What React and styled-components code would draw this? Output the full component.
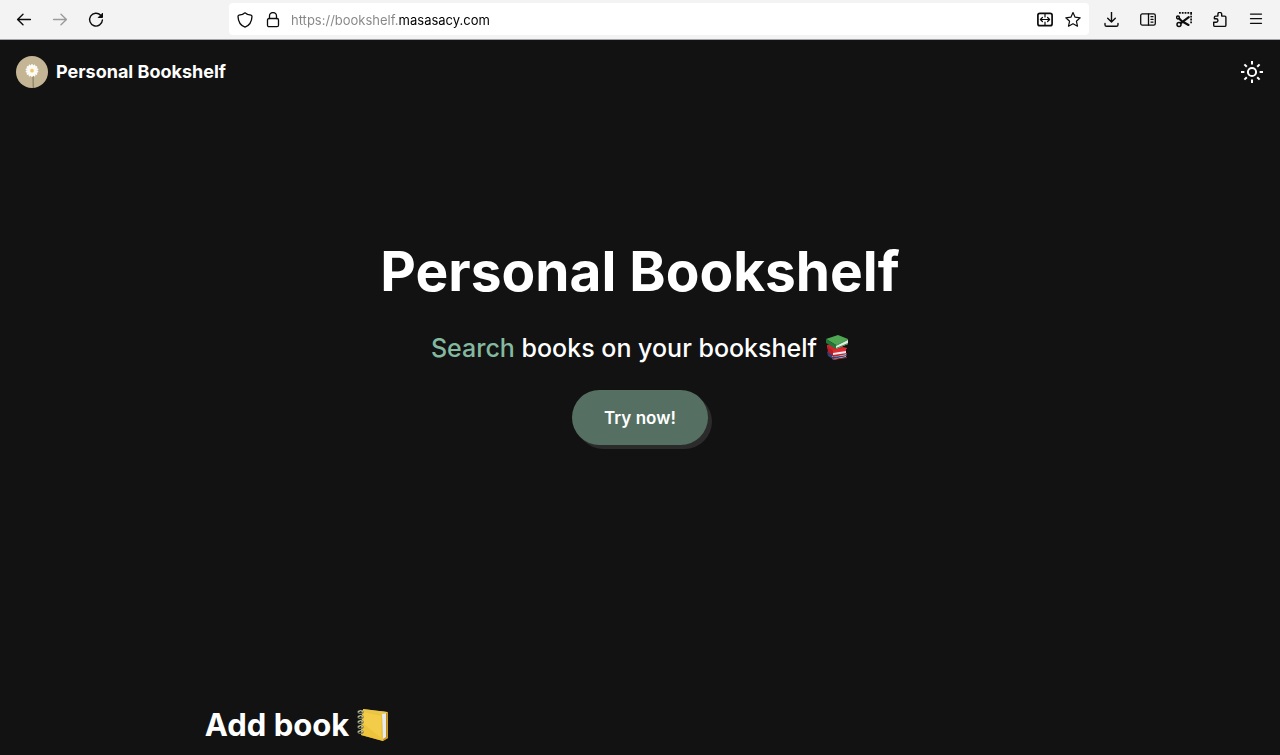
import React from "react";
import styled, { createGlobalStyle } from "styled-components";

const GlobalStyle = createGlobalStyle`
  *, *::before, *::after { box-sizing: border-box; }
  body {
    margin: 0;
    background: #121212;
    color: #fff;
    font-family: Inter, "Liberation Sans", sans-serif;
  }
  h1, h2, p { margin: 0; }
  svg { display: block; flex: none; }
`;

const Page = styled.div`
  min-height: 100vh;
`;

const Toolbar = styled.div`
  display: flex;
  align-items: center;
  height: 40px;
  padding: 0 6px 2px;
  background: #f3f3f3;
  border-bottom: 1px solid #a3a3aa;
  color: #0c0c0d;
`;

const ToolButton = styled.button`
  display: grid;
  place-items: center;
  width: 36px;
  height: 32px;
  padding: 2px 0 0;
  border: 0;
  background: none;
  color: inherit;
  &:disabled { color: #9b9b9b; }
`;

const Spacer = styled.div`
  flex: 0 1 115px;
`;

const AddressBar = styled.form`
  flex: 1;
  display: flex;
  align-items: center;
  height: 32px;
  margin-right: 5px;
  padding: 0 2px;
  border-radius: 4px;
  background: #fff;
`;

const BarButton = styled(ToolButton)`
  width: 28px;
`;

const AddressInput = styled.input`
  flex: 1;
  min-width: 0;
  height: 24px;
  margin-left: 4px;
  padding: 2px 0 0;
  border: 0;
  outline: 0;
  font-family: Inter, "Liberation Sans", sans-serif;
  font-size: 13px;
  background: linear-gradient(to right, #858585 108px, #000 108px);
  background-clip: text;
  -webkit-background-clip: text;
  color: transparent;
  caret-color: #000;
`;

const Header = styled.header`
  display: flex;
  align-items: center;
  justify-content: space-between;
  height: 64px;
  padding: 0 16px;
`;

const Brand = styled.a`
  display: flex;
  align-items: center;
  gap: 8px;
  color: inherit;
  font-size: 18px;
  font-weight: 700;
  line-height: 24px;
  text-decoration: none;
`;

const ThemeButton = styled.button`
  padding: 0;
  border: 0;
  background: none;
  color: inherit;
`;

const Hero = styled.section`
  display: flex;
  flex-direction: column;
  align-items: center;
  gap: 22px;
  padding: 132px 16px 256px;
  text-align: center;
`;

const Title = styled.h1`
  font-size: 55px;
  font-weight: 700;
  line-height: 70px;
`;

const Tagline = styled.p`
  display: flex;
  align-items: center;
  gap: 8px;
  font-size: 25px;
  font-weight: 500;
  line-height: 40px;
`;

const Accent = styled.span`
  color: #84b9a0;
`;

const TryButton = styled.button`
  height: 55px;
  padding: 0 32px;
  border: 0;
  border-radius: 28px;
  background: #557062;
  box-shadow: 4px 4px 0 #2b2b2b;
  color: #fff;
  font-family: inherit;
  font-size: 17px;
  font-weight: 600;
`;

const AddSection = styled.section`
  width: 68%;
  margin: 0 auto;
`;

const SectionTitle = styled.h2`
  display: flex;
  align-items: center;
  gap: 8px;
  font-size: 31px;
  font-weight: 700;
  line-height: 48px;
`;

function Icon({ children, width = "1.4" }) {
  return (
    <svg width="16" height="16" viewBox="0 0 16 16" fill="none" stroke="currentColor"
      strokeWidth={width} strokeLinecap="round" strokeLinejoin="round" aria-hidden="true">
      {children}
    </svg>
  );
}

const BackIcon = () => <Icon><path d="M14.400 7.500H1.800M7 2.200 1.600 7.500 7 12.800" /></Icon>;
const ForwardIcon = () => <Icon><path d="M1.600 7.500h12.600M9 2.200l5.400 5.300L9 12.800" /></Icon>;
const ReloadIcon = () => (
  <Icon>
    <path d="M12.700 3.300A6.400 6.400 0 1 0 14.400 8" />
    <path d="M14.500 1.600v3.900h-3.900z" fill="currentColor" strokeWidth="1" />
  </Icon>
);
const ShieldIcon = () => (
  <Icon width="1.3"><path d="M8 .8 10.500 2.400l3.500.8c.7.200 1 .6 1 1.200C14.800 9.500 12.500 13.500 8 15.200 3.500 13.500 1.200 9.500 1 4.400c0-.6.3-1 1-1.200l3.500-.8z" /></Icon>
);
const LockIcon = () => (
  <Icon width="1.3">
    <rect x="2.500" y="6.500" width="11" height="8.200" rx="1.500" />
    <path d="M4.500 6.500V4a3.500 3.500 0 0 1 7 0v2.500" />
  </Icon>
);
const FitIcon = () => (
  <Icon width="1.2">
    <rect x=".9" y="1.300" width="14.200" height="12.400" rx="2" strokeWidth="1.700" />
    <path d="M8 1.500V5M8 10v3.500M3.500 7.500h9M5.400 5.500l-2 2 2 2M10.600 5.500l2 2-2 2" />
  </Icon>
);
const StarIcon = () => (
  <Icon width="1.2"><path d="m8 .6 2.100 4.600 5.100.6-3.800 3.400 1.100 5L8 11.700l-4.500 2.500 1.100-5L.8 5.800l5.100-.6z" /></Icon>
);
const DownloadIcon = () => (
  <Icon><path d="M7.500 0v9.800M3.700 6.200l3.800 3.800 3.800-3.800M1 11.500v1.200c0 1 .7 1.600 1.600 1.600h9.800c1 0 1.600-.6 1.600-1.600v-1.200" /></Icon>
);
const ReaderIcon = () => (
  <Icon width="1.3">
    <rect x=".7" y="1.900" width="14.600" height="11.200" rx="1.600" />
    <path d="M8.500 1.900v11.200M11 4.700h2M11 7.400h2M11 10.100h2" />
  </Icon>
);
const ScissorsIcon = () => (
  <Icon width="1.5">
    <path d="M3 .9h13M15.100 1v11" strokeDasharray="1.800 1" strokeLinecap="butt" strokeWidth="1.700" />
    <circle cx="2" cy="5.500" r="1.400" />
    <circle cx="3" cy="12.500" r="2" />
    <path d="M3.200 6.500 5.500 9l7 4M4.800 11.200l8-6" strokeWidth="2.100" />
  </Icon>
);
const ExtensionIcon = () => (
  <Icon><path d="M3 14.400h9.700c.8 0 1.200-.4 1.200-1.200V5.300c0-.8-.4-1.200-1.200-1.200h-3V2.300a1.900 1.900 0 0 0-3.800 0v1.800H3.600c-.8 0-1.200.4-1.200 1.200v1.500h1.800a1.700 1.700 0 0 1 0 3.500H1.700v2.900c0 .8.500 1.200 1.300 1.200z" /></Icon>
);
const MenuIcon = () => <Icon width="1.3"><path d="M2.500 2.100h11M2.500 6.700h11M2.500 11.300h11" /></Icon>;

const SunIcon = () => (
  <svg width="24" height="24" viewBox="0 0 24 24" fill="none" stroke="currentColor" strokeWidth="2" aria-hidden="true">
    <circle cx="12" cy="12" r="4.100" />
    <path d="M12 1v3.400M12 19.600V23M1 12h3.400M19.600 12H23M4.400 4.400l2.400 2.400M17.200 17.200l2.400 2.400M4.400 19.600l2.400-2.400M17.200 6.800l2.400-2.400" />
  </svg>
);

const petals = Array.from({ length: 14 }, (_, i) => (i * 360) / 14);

const Daisy = () => (
  <svg width="32" height="32" viewBox="0 0 32 32" aria-hidden="true">
    <circle cx="16" cy="16" r="16" fill="#c4b594" />
    <path d="M16.500 18c1.200 4 .2 8 .9 14" fill="none" stroke="#817c5d" strokeWidth="1.100" />
    {petals.map((angle) => (
      <ellipse key={angle} cx="16" cy="11.200" rx="1.300" ry="3.300" fill="#fdfcf9" transform={`rotate(${angle} 16 14.500)`} />
    ))}
    <circle cx="16" cy="14.700" r="1.900" fill="#f2c667" />
  </svg>
);

const BooksEmoji = () => (
  <svg width="24" height="26" viewBox="0 0 24 26" role="img" aria-label="Books">
    <path d="m2 17 3-2 17 4v2L8 24l-5-3z" fill="#323c68" />
    <path d="m7 21 14-2v3L8 25z" fill="#dfdde3" />
    <path d="m4 19 4 3 14-2v1L8 24l-4-3z" fill="#37457a" />
    <path d="m8 24 14-2v1L8 25z" fill="#8c2731" />
    <path d="m2 10 5-1 15 4v1L8 17l-6-4z" fill="#cf242b" />
    <path d="m8 15 13-2v4L8 20z" fill="#e02a32" />
    <path d="m8 18 13-2v3L8 21z" fill="#eeeaf0" />
    <path d="m2 11 6 5v5l-5-4z" fill="#b51d28" />
    <path d="m8 20 14-2v1L8 22z" fill="#c2222a" />
    <path d="M1 4 13 0l10 4-12 6z" fill="#4fa653" />
    <path d="m1 4 10 6v4L1 8z" fill="#237638" />
    <path d="m11 10 12-6v5l-12 5z" fill="#e5eae1" />
    <path d="m11 10 12-6v1l-12 6zM11 13l12-5v1l-12 5z" fill="#28863d" />
  </svg>
);

const NotebookEmoji = () => (
  <svg width="32" height="34" viewBox="0 0 32 34" role="img" aria-label="Notebook">
    <path d="m6 1 25 3v26l-5 3-22-6z" fill="#b48a1c" />
    <path d="M6 2 29 4v25l-4 3z" fill="#c4c8cc" />
    <path d="m25 6 4-1v24l-3 2z" fill="#e8ebee" />
    <path d="m5 2 20 4 1 27-22-6z" fill="#edc43c" />
    <path d="m7 4 17 4v22L7 16z" fill="#f3cd49" />
    <path d="M6 1 30 4v1L25 6 6 3z" fill="#eac64b" />
    <path d="m30 4 1 1v25l-5 3v-2l4-2z" fill="#d09b25" />
    {[4, 9, 14, 19, 24].map((y) => (
      <g key={y} fill="none">
        <ellipse cx="3.500" cy={y} rx="2.500" ry="1.400" stroke="#70765f" strokeWidth="1.400" />
        <path d={`M1 ${y}q3-3 5 0`} stroke="#c8cfb0" />
      </g>
    ))}
  </svg>
);

const tools = [
  ["Downloads", DownloadIcon],
  ["Sidebar", ReaderIcon],
  ["Take screenshot", ScissorsIcon],
  ["Extensions", ExtensionIcon],
  ["Menu", MenuIcon],
];

export default function App() {
  return (
    <Page>
      <GlobalStyle />
      <Toolbar>
        <ToolButton type="button" aria-label="Back"><BackIcon /></ToolButton>
        <ToolButton type="button" aria-label="Forward" disabled><ForwardIcon /></ToolButton>
        <ToolButton type="button" aria-label="Reload"><ReloadIcon /></ToolButton>
        <Spacer />
        <AddressBar onSubmit={(event) => event.preventDefault()}>
          <BarButton type="button" aria-label="Tracking protection"><ShieldIcon /></BarButton>
          <BarButton type="button" aria-label="Site security"><LockIcon /></BarButton>
          <AddressInput type="text" aria-label="Address" defaultValue="https://bookshelf.masasacy.com" />
          <BarButton type="button" aria-label="Fit width"><FitIcon /></BarButton>
          <BarButton type="button" aria-label="Bookmark this page"><StarIcon /></BarButton>
        </AddressBar>
        {tools.map(([label, Glyph]) => (
          <ToolButton key={label} type="button" aria-label={label}><Glyph /></ToolButton>
        ))}
      </Toolbar>
      <Header>
        <Brand href="#"><Daisy />Personal Bookshelf</Brand>
        <ThemeButton type="button" aria-label="Switch theme"><SunIcon /></ThemeButton>
      </Header>
      <main>
        <Hero>
          <Title>Personal Bookshelf</Title>
          <Tagline>
            <span><Accent>Search</Accent> books on your bookshelf</span>
            <BooksEmoji />
          </Tagline>
          <TryButton type="button">Try now!</TryButton>
        </Hero>
        <AddSection>
          <SectionTitle>Add book <NotebookEmoji /></SectionTitle>
        </AddSection>
      </main>
    </Page>
  );
}
